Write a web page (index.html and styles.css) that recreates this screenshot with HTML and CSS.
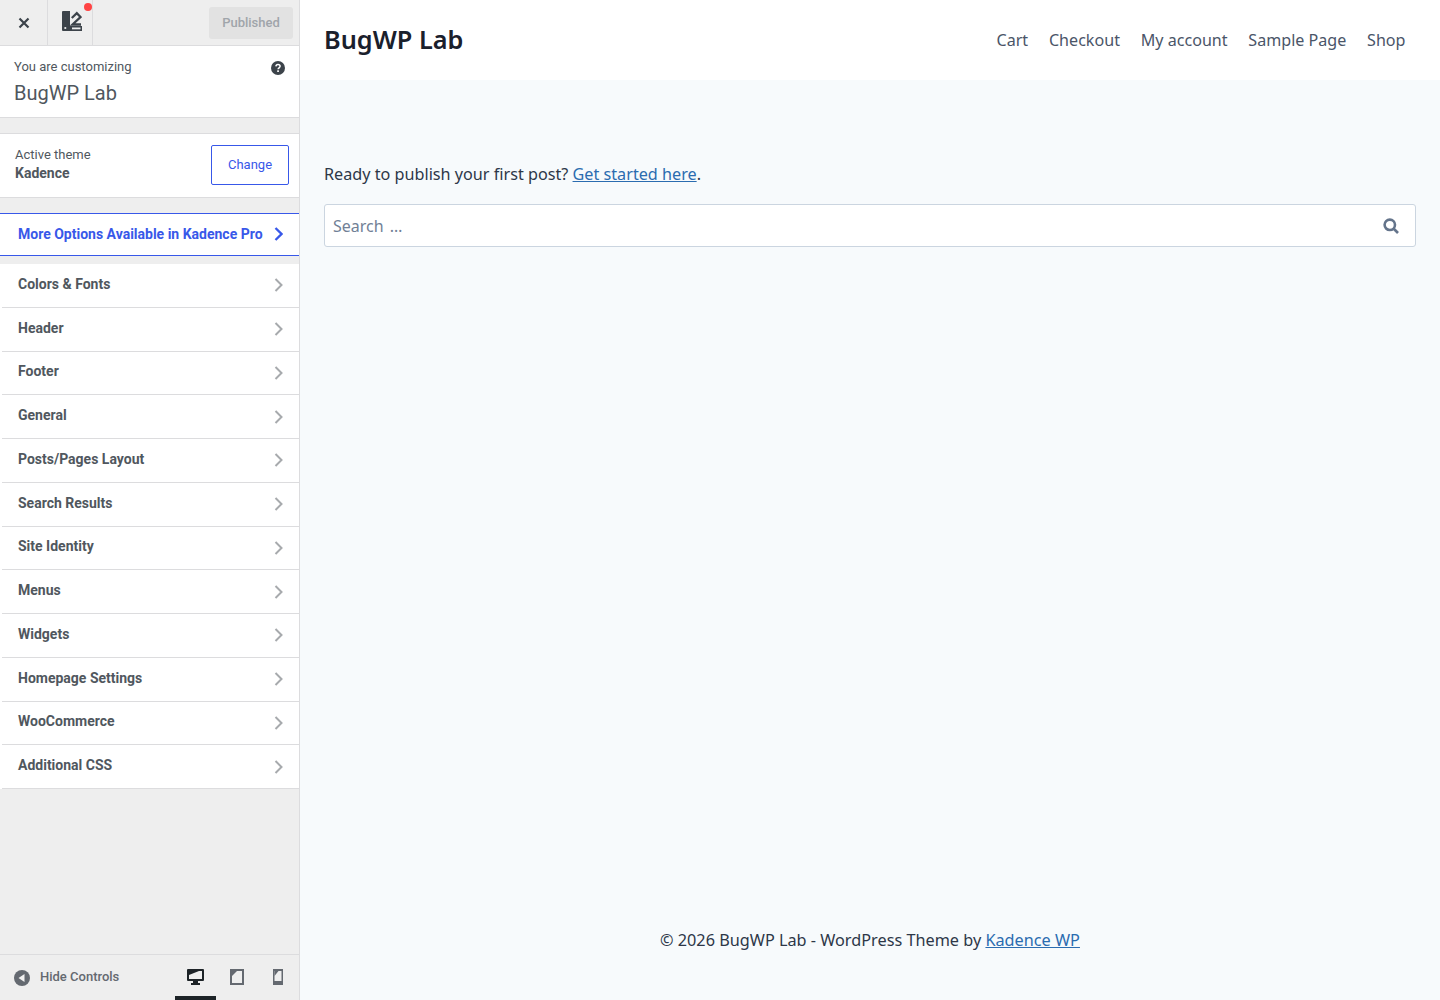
FILE: index.html
```html
<!DOCTYPE html>
<html lang="en">

<head>
  <meta charset="UTF-8">
  <title>BugWP Lab</title>
  <link rel="stylesheet" href="styles.css">
</head>

<body>
  <aside class="sidebar">
    <div class="topbar">
      <button class="close-btn" aria-label="Close">
        <svg width="12" height="12" viewBox="0 0 12 12"><path d="M1.500 1.500l9 9M10.500 1.500l-9 9" stroke="#3c434a" stroke-width="2.200" fill="none"/></svg>
      </button>
      <div class="kadence-btn">
        <svg width="20" height="20" viewBox="0 0 20 20">
          <path d="M1 0h7v15h12v5H1q-1 0-1-1V1q0-1 1-1z" fill="#3c434a"/>
          <path d="M9.800 7L14.800 2.200 18.500 6 10.500 13.500H19" stroke="#3c434a" stroke-width="2.300" fill="none"/>
          <rect x="10" y="16.500" width="8.500" height="1.800" fill="#eeeeee"/>
          <circle cx="3.300" cy="17" r="1.100" fill="#eeeeee"/>
        </svg>
        <span class="dot"></span>
      </div>
      <button class="publish-btn">Published</button>
    </div>

    <div class="info">
      <div class="info-text">
        <span class="info-label">You are customizing</span>
        <span class="info-title">BugWP Lab</span>
      </div>
      <svg class="help" width="14" height="14" viewBox="0 0 14 14">
        <circle cx="7" cy="7" r="7" fill="#3c434a"/>
        <path d="M4.900 5.400C5 4.200 5.900 3.500 7 3.500c1.200 0 2.100.8 2.100 1.800 0 1.500-2 1.500-2 3" stroke="#fff" stroke-width="1.500" fill="none"/>
        <rect x="6.200" y="9.300" width="1.700" height="1.700" fill="#fff"/>
      </svg>
    </div>

    <div class="theme">
      <div class="theme-text">
        <div class="theme-label">Active theme</div>
        <div class="theme-name">Kadence</div>
      </div>
      <button class="change-btn">Change</button>
    </div>

    <div class="pro-row">
      <span>More Options Available in Kadence Pro</span>
      <svg class="chevron" width="9" height="14" viewBox="0 0 9 14"><path d="M1.500 1l6 6-6 6" stroke="#3858e9" stroke-width="2.300" fill="none"/></svg>
    </div>

    <ul class="menu">
      <li>Colors &amp; Fonts<svg class="chevron" width="9" height="14" viewBox="0 0 9 14"><path d="M1.500 1l6 6-6 6" stroke="#a7aaad" stroke-width="2" fill="none"/></svg></li>
      <li>Header<svg class="chevron" width="9" height="14" viewBox="0 0 9 14"><path d="M1.500 1l6 6-6 6" stroke="#a7aaad" stroke-width="2" fill="none"/></svg></li>
      <li>Footer<svg class="chevron" width="9" height="14" viewBox="0 0 9 14"><path d="M1.500 1l6 6-6 6" stroke="#a7aaad" stroke-width="2" fill="none"/></svg></li>
      <li>General<svg class="chevron" width="9" height="14" viewBox="0 0 9 14"><path d="M1.500 1l6 6-6 6" stroke="#a7aaad" stroke-width="2" fill="none"/></svg></li>
      <li>Posts/Pages Layout<svg class="chevron" width="9" height="14" viewBox="0 0 9 14"><path d="M1.500 1l6 6-6 6" stroke="#a7aaad" stroke-width="2" fill="none"/></svg></li>
      <li>Search Results<svg class="chevron" width="9" height="14" viewBox="0 0 9 14"><path d="M1.500 1l6 6-6 6" stroke="#a7aaad" stroke-width="2" fill="none"/></svg></li>
      <li>Site Identity<svg class="chevron" width="9" height="14" viewBox="0 0 9 14"><path d="M1.500 1l6 6-6 6" stroke="#a7aaad" stroke-width="2" fill="none"/></svg></li>
      <li>Menus<svg class="chevron" width="9" height="14" viewBox="0 0 9 14"><path d="M1.500 1l6 6-6 6" stroke="#a7aaad" stroke-width="2" fill="none"/></svg></li>
      <li>Widgets<svg class="chevron" width="9" height="14" viewBox="0 0 9 14"><path d="M1.500 1l6 6-6 6" stroke="#a7aaad" stroke-width="2" fill="none"/></svg></li>
      <li>Homepage Settings<svg class="chevron" width="9" height="14" viewBox="0 0 9 14"><path d="M1.500 1l6 6-6 6" stroke="#a7aaad" stroke-width="2" fill="none"/></svg></li>
      <li>WooCommerce<svg class="chevron" width="9" height="14" viewBox="0 0 9 14"><path d="M1.500 1l6 6-6 6" stroke="#a7aaad" stroke-width="2" fill="none"/></svg></li>
      <li>Additional CSS<svg class="chevron" width="9" height="14" viewBox="0 0 9 14"><path d="M1.500 1l6 6-6 6" stroke="#a7aaad" stroke-width="2" fill="none"/></svg></li>
    </ul>

    <div class="bottombar">
      <div class="hide-controls">
        <svg width="16" height="16" viewBox="0 0 16 16"><circle cx="8" cy="8" r="8" fill="#646970"/><path d="M10.500 4v8L4.500 8z" fill="#f0f0f0"/></svg>
        <span>Hide Controls</span>
      </div>
      <div class="devices">
        <div class="device active">
          <svg width="17" height="16" viewBox="0 0 17 16"><path d="M1 0h15q1 0 1 1v10q0 1-1 1h-5v2h2v2H4v-2h2v-2H1q-1 0-1-1V1q0-1 1-1z" fill="#1d2327"/><path d="M2 2h13v8H2z" fill="#eeeeee"/><path d="M2 2h10L2 6z" fill="#1d2327"/></svg>
        </div>
        <div class="device">
          <svg width="14" height="16" viewBox="0 0 14 16"><path d="M0 0h14v16H0z" fill="#646970"/><path d="M2 2h10v12H2z" fill="#eeeeee"/><path d="M2 2h5L2 7z" fill="#646970"/></svg>
        </div>
        <div class="device">
          <svg width="10" height="16" viewBox="0 0 10 16"><path d="M0 0h10v16H0z" fill="#646970"/><path d="M1.500 2h7v10h-7z" fill="#eeeeee"/><path d="M1.500 2h4l-4 5z" fill="#646970"/></svg>
        </div>
      </div>
    </div>
  </aside>

  <div class="site">
    <header class="site-header">
      <div class="brand">BugWP Lab</div>
      <nav class="nav">
        <a>Cart</a>
        <a>Checkout</a>
        <a>My account</a>
        <a>Sample Page</a>
        <a>Shop</a>
      </nav>
    </header>

    <main class="content">
      <p class="lead">Ready to publish your first post? <a href="#">Get started here</a>.</p>
      <div class="search">
        <span>Search …</span>
        <svg width="16" height="16" viewBox="0 0 16 16"><circle cx="6.800" cy="6.800" r="5.200" stroke="#64748b" stroke-width="2.600" fill="none"/><path d="M10.500 10.500l4.500 4.500" stroke="#64748b" stroke-width="2.600"/></svg>
      </div>
    </main>

    <footer class="site-footer">© 2026 BugWP Lab - WordPress Theme by <a href="#">Kadence WP</a></footer>
  </div>
</body>

</html>
```

FILE: styles.css
```css
* {
  box-sizing: border-box;
}

body {
  margin: 0;
  height: 1000px;
  display: flex;
  overflow: hidden;
  font-family: "Noto Sans", sans-serif;
  background-color: #f7fafc;
}

.sidebar {
  width: 300px;
  height: 1000px;
  display: flex;
  flex-direction: column;
  flex-shrink: 0;
  background: #eeeeee;
  border-right: 1px solid #dcdcde;
  font-family: Roboto, sans-serif;
  color: #50575e;
}

.topbar {
  height: 46px;
  display: flex;
  align-items: stretch;
  border-bottom: 1px solid #dcdcde;
}

.close-btn {
  width: 48px;
  padding: 0;
  background: none;
  border: none;
  border-right: 1px solid #dcdcde;
  display: flex;
  align-items: center;
  justify-content: center;
}

.kadence-btn {
  position: relative;
  width: 45px;
  border-right: 1px solid #dcdcde;
  display: flex;
  align-items: flex-start;
  justify-content: center;
  padding: 11px 0 0 3px;
}

.dot {
  position: absolute;
  top: 3px;
  right: 0;
  width: 8px;
  height: 8px;
  border-radius: 50%;
  background: #f44;
}

.publish-btn {
  width: 84px;
  height: 32px;
  margin: 7px 6px 0 auto;
  padding: 0 0 2px;
  border: none;
  border-radius: 3px;
  background: #e2e2e2;
  color: #a0a5aa;
  font-family: Roboto, sans-serif;
  font-size: 13px;
  font-weight: 500;
}

.info {
  height: 72px;
  padding: 13px 14px 0;
  display: flex;
  justify-content: space-between;
  background: #fff;
  border-bottom: 1px solid #dcdcde;
}

.info-label {
  display: block;
  font-size: 13px;
  line-height: 15px;
}

.info-title {
  display: block;
  margin-top: 6px;
  font-size: 20px;
  line-height: 26px;
}

.help {
  margin-top: 2px;
}

.theme {
  height: 65px;
  margin-top: 15px;
  padding: 0 10px 2px 15px;
  display: flex;
  align-items: center;
  justify-content: space-between;
  background: #fff;
  border-top: 1px solid #dcdcde;
  border-bottom: 1px solid #dcdcde;
}

.theme-text {
  margin-bottom: 2px;
}

.theme-label {
  font-size: 13px;
  line-height: 17px;
}

.theme-name {
  margin-top: 1px;
  font-size: 14px;
  line-height: 18px;
  font-weight: 700;
}

.change-btn {
  width: 78px;
  height: 40px;
  padding: 0;
  background: #fff;
  border: 1px solid #3858e9;
  border-radius: 2px;
  color: #3858e9;
  font-family: Roboto, sans-serif;
  font-size: 13px;
}

.pro-row {
  height: 43px;
  margin-top: 15px;
  padding: 0 16px 2px 18px;
  display: flex;
  align-items: center;
  justify-content: space-between;
  background: #fff;
  border-top: 1px solid #3858e9;
  border-bottom: 1px solid #3858e9;
  color: #3858e9;
  font-size: 14px;
  font-weight: 700;
}

.menu {
  height: 525px;
  margin: 8px 0 0;
  padding: 0;
  list-style: none;
  display: grid;
  grid-auto-rows: 1fr;
}

.menu li {
  padding: 0 16px 4px 18px;
  display: flex;
  align-items: center;
  justify-content: space-between;
  background: linear-gradient(#dcdcde, #dcdcde) no-repeat 2px 100% / 100% 1px, #fff;
  font-size: 14px;
  font-weight: 700;
}

.menu .chevron {
  margin-top: 3px;
}

.bottombar {
  height: 46px;
  margin-top: auto;
  display: flex;
  align-items: stretch;
  justify-content: space-between;
  border-top: 1px solid #dcdcde;
}

.hide-controls {
  padding-left: 14px;
  display: flex;
  align-items: center;
  gap: 10px;
  color: #646970;
  font-size: 13px;
  font-weight: 500;
}

.hide-controls span {
  margin-top: -2px;
}

.devices {
  display: flex;
}

.device {
  width: 41.500px;
  display: flex;
  align-items: center;
  justify-content: center;
  padding-top: 3px;
  border-bottom: 4px solid transparent;
}

.device.active {
  border-bottom-color: #1d2327;
}

.site {
  flex: 1;
  height: 1000px;
  display: flex;
  flex-direction: column;
}

.site-header {
  height: 80px;
  padding: 0 24px;
  display: flex;
  align-items: center;
  justify-content: space-between;
  background: #fff;
}

.brand {
  margin-bottom: 2px;
  font-size: 25.300px;
  font-weight: 600;
  color: #1a202c;
}

.nav {
  display: flex;
  gap: 20.750px;
  padding-right: 10.500px;
  font-size: 16.100px;
  color: #4a5568;
}

.content {
  flex: 1;
  padding: 82px 24px 0;
}

.lead {
  margin: 0 0 18px;
  font-size: 16.200px;
  line-height: 24px;
  color: #2d3748;
}

.lead a,
.site-footer a {
  color: #2b6cb0;
}

.search {
  height: 43px;
  padding: 0 16px 0 8px;
  display: flex;
  align-items: center;
  justify-content: space-between;
  background: #fff;
  border: 1px solid #cbd5e0;
  border-radius: 3px;
  font-size: 16px;
  word-spacing: 2px;
  color: #718096;
}

.site-footer {
  padding-bottom: 48px;
  text-align: center;
  font-size: 16.250px;
  line-height: 24px;
  color: #2d3748;
}
```
